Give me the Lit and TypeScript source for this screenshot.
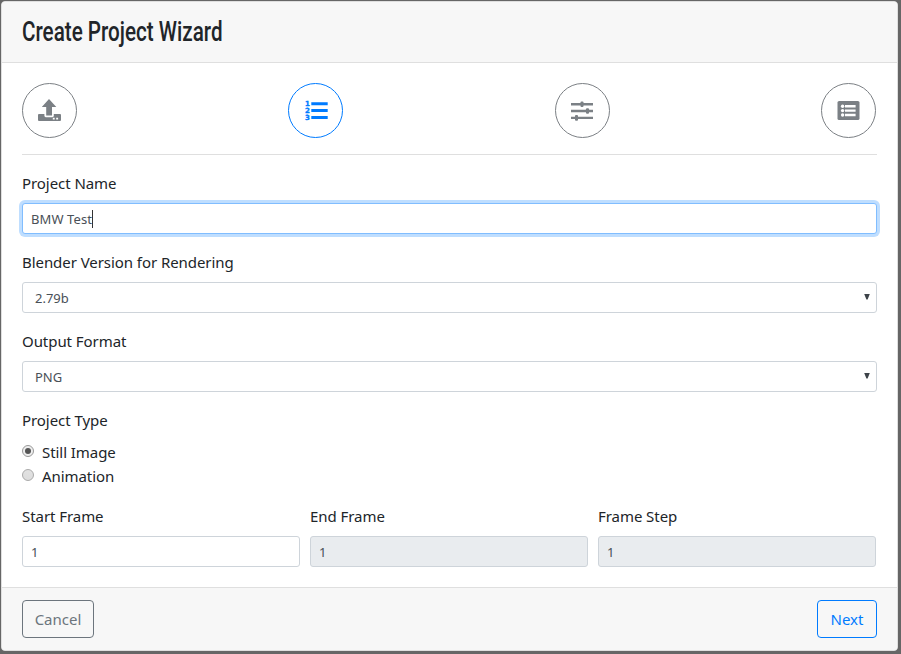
import { LitElement, html, svg, css } from "lit";
import { customElement } from "lit/decorators.js";
import { classMap } from "lit/directives/class-map.js";

const upload = svg`<path d="M14 3 L21.3 11 H17 V19.4 H11.2 V11 H6.8 Z"/><path d="M4 18 h5.4 v1.8 q0 1.4 1.4 1.4 h6.6 q1.4 0 1.4-1.4 v-1.8 h6.2 q1 0 1 1 v5 q0 1-1 1 H4 q-1 0-1-1 v-5 q0-1 1-1z"/><path class="hole" d="M17.8 21.8h1.9v1.6h-1.9z M21.2 21.8h1.9v1.6h-1.9z"/>`;
const numbered = svg`<path d="M10.3 6.3h16.4v2.9H10.3z M10.3 13.1h16.4v2.9H10.3z M10.3 20h16.4v2.9H10.3z"/><text x="4" y="10">1</text><text x="4" y="17">2</text><text x="4" y="24">3</text>`;
const sliders = svg`<path d="M4 7h22v2.4H4z M4 13.8h22v2.4H4z M4 20.7h22v2.4H4z"/><rect x="13.5" y="5.4" width="3" height="5.6" rx="1"/><rect x="19" y="12.2" width="3" height="5.6" rx="1"/><rect x="8" y="19.1" width="3" height="5.6" rx="1"/>`;
const list = svg`<rect x="4.5" y="5" width="22" height="19" rx="1.6"/><circle class="hole" cx="9.6" cy="10.2" r="1.7"/><circle class="hole" cx="9.6" cy="14.6" r="1.7"/><circle class="hole" cx="9.6" cy="19" r="1.7"/><path class="hole" d="M12 9h10.6v2.4H12z M12 13.4h10.6v2.4H12z M12 17.8h10.6v2.4H12z"/>`;

@customElement("app-root")
export class AppRoot extends LitElement {
  static styles = css`
    :host { display: block; height: 654px; padding: 1px 3px 3px 1px; box-sizing: border-box; background: #666; color: #212529; font: 15px/24px "Noto Sans", "Open Sans", sans-serif; letter-spacing: -0.06px; overflow: hidden; }
    * { box-sizing: border-box; }
    .card { height: 650px; display: flex; flex-direction: column; background: #fff; border: 1px solid #dfdfdf; border-radius: 4px; overflow: hidden; }
    header { height: 61px; flex: none; padding: 12px 20px; background: #f7f7f7; border-bottom: 1px solid #dfdfdf; }
    h1 { margin: 0; font: 500 27px/36px Roboto, sans-serif; letter-spacing: 0; transform: scaleX(.765); transform-origin: 0 50%; white-space: nowrap; }
    main { flex: 1; padding: 20px 20px 0; }
    .steps { display: flex; justify-content: space-between; height: 72px; border-bottom: 1px solid #dfdfdf; margin-bottom: 16px; padding-right: 1px; }
    .step { width: 55px; height: 55px; border: 1px solid #7b7f84; border-radius: 50%; color: #7b8085; display: grid; place-items: center; }
    .step.active { color: #007bff; border-color: #007bff; }
    svg { width: 30px; height: 30px; fill: currentColor; display: block; }
    svg .hole { fill: #fff; }
    svg text { font: bold 7px "DejaVu Sans", sans-serif; letter-spacing: 0; stroke: currentColor; stroke-width: .35px; }
    .field { margin-bottom: 16px; }
    .label { display: block; height: 24px; margin-bottom: 8px; white-space: nowrap; }
    .control { height: 31px; border: 1px solid #ced4da; border-radius: 3px; padding: 0 8px; display: flex; align-items: center; font-size: 13px; letter-spacing: 0; color: #495057; background: #fff; }
    .focus { border-color: #80bdff; box-shadow: 0 0 0 3px #bfdeff; letter-spacing: .1px; }
    .caret { width: 1px; height: 18px; background: #333; }
    .select { padding: 0 6px 0 12px; justify-content: space-between; }
    .arrow { width: 6px; height: 6px; background: #3d4349; clip-path: polygon(0 0, 100% 0, 60% 100%, 40% 100%); margin-bottom: 2px; }
    .disabled { background: #e9ecef; }
    .radios { margin-top: -1px; padding-top: 1px; }
    .radio { display: flex; align-items: center; height: 24px; gap: 8px; }
    .dot { width: 12px; height: 12px; border: 1px solid #aaa; border-radius: 50%; background: linear-gradient(#e2e2e2, #ddd); display: grid; place-items: center; margin-bottom: 2px; }
    .dot.on { background: #eee; border-color: #999; }
    .dot.on::after { content: ""; width: 6px; height: 6px; border-radius: 50%; background: #555; }
    .frames { display: grid; grid-template-columns: repeat(3, 278px); column-gap: 10px; margin-top: 16px; }
    footer { height: 63px; flex: none; padding: 12px 20px; background: #f7f7f7; border-top: 1px solid #dfdfdf; display: flex; justify-content: space-between; }
    .button { height: 38px; border: 1px solid #6c757d; border-radius: 4px; background: transparent; color: #6c757d; font: inherit; letter-spacing: 0; width: 72px; padding: 0; }
    .next { width: 60px; color: #007bff; border-color: #007bff; }
  `;

  private step(icon: unknown, active = false) {
    return html`<div class=${classMap({ step: true, active })}><svg viewBox="0 0 30 30">${icon}</svg></div>`;
  }

  private select(label: string, value: string) {
    return html`<div class="field"><span class="label">${label}</span><div class="control select"><span>${value}</span><i class="arrow"></i></div></div>`;
  }

  private radio(label: string, on = false) {
    return html`<div class="radio"><i class=${classMap({ dot: true, on })}></i><span>${label}</span></div>`;
  }

  private frame(label: string, disabled = false) {
    return html`<div><span class="label">${label}</span><div class=${classMap({ control: true, disabled })}>1</div></div>`;
  }

  render() {
    return html`<div class="card">
      <header><h1>Create Project Wizard</h1></header>
      <main>
        <div class="steps">${this.step(upload)}${this.step(numbered, true)}${this.step(sliders)}${this.step(list)}</div>
        <div class="field"><span class="label">Project Name</span><div class="control focus"><span>BMW Test</span><i class="caret"></i></div></div>
        ${this.select("Blender Version for Rendering", "2.79b")}
        ${this.select("Output Format", "PNG")}
        <span class="label">Project Type</span>
        <div class="radios">${this.radio("Still Image", true)}${this.radio("Animation")}</div>
        <div class="frames">${this.frame("Start Frame")}${this.frame("End Frame", true)}${this.frame("Frame Step", true)}</div>
      </main>
      <footer><button class="button">Cancel</button><button class="button next">Next</button></footer>
    </div>`;
  }
}
